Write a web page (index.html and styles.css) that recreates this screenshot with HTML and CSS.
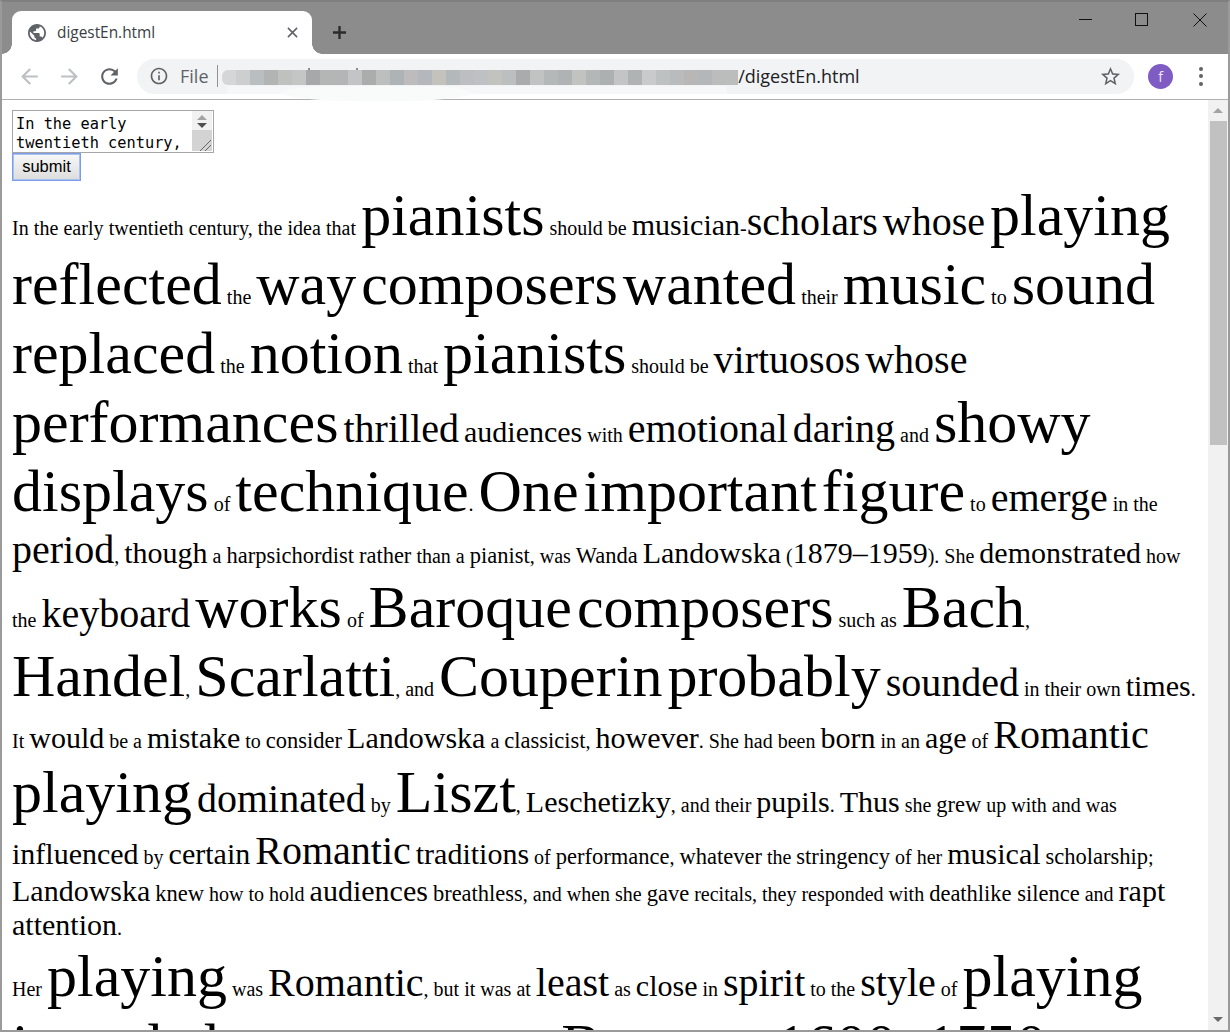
FILE: index.html
```html
<!DOCTYPE html>
<html>
	<head>
		<meta charset="UTF-8">
		<title>digestEn.html</title>
		<link rel="stylesheet" href="styles.css">
	</head>
	<body>
		<div class="window">
			<div class="tabstrip">
				<div class="tab">
					<svg class="favicon" viewBox="2 2 20 20"><path d="M12 2C6.48 2 2 6.48 2 12s4.48 10 10 10 10-4.48 10-10S17.52 2 12 2zm-1 17.93c-3.95-.49-7-3.85-7-7.93 0-.62.08-1.21.21-1.79L9 15v1c0 1.1.9 2 2 2v1.93zm6.9-2.54c-.26-.81-1-1.39-1.9-1.39h-1v-3c0-.55-.45-1-1-1H8v-2h2c.55 0 1-.45 1-1V7h2c1.1 0 2-.9 2-2v-.41c2.93 1.19 5 4.06 5 7.41 0 2.08-.8 3.97-2.1 5.39z"/></svg>
					<span class="tab-title">digestEn.html</span>
					<svg class="tab-close" viewBox="0 0 12 12"><path d="M1 1l10 10M11 1L1 11"/></svg>
				</div>
				<svg class="tab-new" viewBox="0 0 16 16"><path d="M8 1v14M1 8h14"/></svg>
				<div class="winbtns">
					<svg viewBox="0 0 14 14"><path d="M0 6.500h13"/></svg>
					<svg viewBox="0 0 14 14"><rect x=".5" y=".5" width="12" height="12"/></svg>
					<svg viewBox="0 0 14 14"><path d="M.5.5l13 13M13.500 .5l-13 13"/></svg>
				</div>
			</div>

			<div class="toolbar">
				<svg class="tool off" viewBox="0 0 24 24"><path d="M20 11H7.830l5.590-5.590L12 4l-8 8 8 8 1.410-1.410L7.830 13H20v-2z"/></svg>
				<svg class="tool off" viewBox="0 0 24 24"><path d="M4 11h12.170l-5.590-5.590L12 4l8 8-8 8-1.410-1.410L16.170 13H4v-2z"/></svg>
				<svg class="tool" viewBox="0 0 24 24"><path d="M17.650 6.350C16.200 4.900 14.210 4 12 4c-4.420 0-7.990 3.580-7.990 8s3.570 8 7.990 8c3.730 0 6.840-2.550 7.730-6h-2.080c-.82 2.330-3.040 4-5.650 4-3.310 0-6-2.690-6-6s2.690-6 6-6c1.660 0 3.140.69 4.220 1.780L13 11h7V4l-2.350 2.350z"/></svg>
				<div class="omnibox">
					<svg class="info" viewBox="0 0 24 24"><path d="M11 7h2v2h-2zm0 4h2v6h-2zm1-9C6.480 2 2 6.480 2 12s4.480 10 10 10 10-4.480 10-10S17.520 2 12 2zm0 18c-4.410 0-8-3.590-8-8s3.590-8 8-8 8 3.590 8 8-3.590 8-8 8z"/></svg>
					<span class="scheme">File</span>
					<span class="sep"></span>
					<span class="mosaic"></span>
					<span class="url">/digestEn.html</span>
					<svg class="star" viewBox="0 0 24 24"><path d="M22 9.240l-7.190-.62L12 2 9.190 8.630 2 9.240l5.460 4.730L5.820 21 12 17.270 18.180 21l-1.630-7.030L22 9.240zM12 15.400l-3.760 2.270 1-4.280-3.320-2.880 4.380-.38L12 6.100l1.710 4.040 4.380.38-3.320 2.880 1 4.280L12 15.400z"/></svg>
				</div>
				<div class="avatar">f</div>
				<div class="kebab"><i></i><i></i><i></i></div>
				<div class="smudge"></div>
			</div>

			<div class="view">
				<div class="page">
					<form class="digest-form">
						<div class="field">
							<textarea class="field-text">In the early twentieth century, the idea that pianists should be musician-scholars whose playing reflected the way composers wanted their music to sound</textarea>
							<div class="field-bar">
								<div class="field-arrows"><i class="up"></i><i class="down"></i></div>
								<div class="field-grip">
									<svg viewBox="0 0 12 12"><path d="M1 12L12 1M6 12l6-6"/></svg>
								</div>
							</div>
						</div>
						<button class="submit" type="button">submit</button>
					</form>

					<p class="digest"><span class="lead">In the early twentieth century, the idea that</span> <span class="f48">pianists</span> should be <span class="f24">musician</span>-<span class="f32">scholars</span> <span class="f32">whose</span> <span class="f48">playing</span> <span class="f48">reflected</span> the <span class="f48">way</span> <span class="f48">composers</span> <span class="f48">wanted</span> their <span class="f48">music</span> to <span class="f48">sound</span> <span class="f48">replaced</span> the <span class="f48">notion</span> that <span class="f48">pianists</span> should be <span class="f32">virtuosos</span> <span class="f32">whose</span> <span class="f48">performances</span> <span class="f32">thrilled</span> <span class="f24">audiences</span> with <span class="f32">emotional</span> <span class="f32">daring</span> and <span class="f48">showy</span> <span class="f48">displays</span> of <span class="f48">technique</span>. <span class="f48">One</span> <span class="f48">important</span> <span class="f48">figure</span> to <span class="f32">emerge</span> in the <span class="f32">period</span>, <span class="f24">though</span> a <span class="f18">harpsichordist</span> <span class="f18">rather</span> than a <span class="f18">pianist</span>, was <span class="f18">Wanda</span> <span class="f24">Landowska</span> (<span class="f24">1879–1959</span>). She <span class="f24">demonstrated</span> how the <span class="f32">keyboard</span> <span class="f48">works</span> of <span class="f48">Baroque</span> <span class="f48">composers</span> such as <span class="f48">Bach</span>, <span class="f48">Handel</span>, <span class="f48">Scarlatti</span>, and <span class="f48">Couperin</span> <span class="f48">probably</span> <span class="f32">sounded</span> in their own <span class="f24">times</span>. It <span class="f24">would</span> be a <span class="f24">mistake</span> to <span class="f18">consider</span> <span class="f24">Landowska</span> a <span class="f18">classicist</span>, <span class="f24">however</span>. She had been <span class="f24">born</span> in an <span class="f24">age</span> of <span class="f32">Romantic</span> <span class="f48">playing</span> <span class="f32">dominated</span> by <span class="f48">Liszt</span>, <span class="f24">Leschetizky</span>, and their <span class="f24">pupils</span>. <span class="f24">Thus</span> she <span class="f18">grew</span> up with and was <span class="f24">influenced</span> by <span class="f24">certain</span> <span class="f32">Romantic</span> <span class="f24">traditions</span> of <span class="f18">performance</span>, <span class="f18">whatever</span> the <span class="f18">stringency</span> of her <span class="f24">musical</span> <span class="f18">scholarship</span>; <span class="f24">Landowska</span> <span class="f18">knew</span> how to hold <span class="f24">audiences</span> <span class="f18">breathless</span>, and when she <span class="f18">gave</span> recitals, they responded with <span class="f18">deathlike silence</span> and <span class="f24">rapt</span> <span class="f24">attention</span>.</p>

					<p class="digest">Her <span class="f48">playing</span> was <span class="f32">Romantic</span>, but it was at <span class="f32">least</span> as <span class="f24">close</span> in <span class="f32">spirit</span> to the <span class="f32">style</span> of <span class="f48">playing</span> <span class="f48">intended</span> by <span class="f48">composers</span> of the <span class="f48">Baroque</span> (<span class="f48">1600–1750</span>).</p>
				</div>

				<div class="scrollbar">
					<div class="scroll-btn"><i class="up"></i></div>
					<div class="thumb"></div>
					<div class="scroll-rest"></div>
					<div class="scroll-btn"><i class="down"></i></div>
				</div>
			</div>
		</div>
	</body>
</html>
```

FILE: styles.css
```css
* {
	box-sizing: border-box;
}

html, body {
	margin: 0;
	padding: 0;
	height: 100%;
	overflow: hidden;
}

.window {
	width: 1230px;
	height: 1032px;
	display: flex;
	flex-direction: column;
	border: 2px solid #9a9a9a;
	border-top-color: #808080;
	overflow: hidden;
	background: #fff;
}

/* tab strip */
.tabstrip {
	height: 52px;
	flex: none;
	display: flex;
	align-items: flex-end;
	padding-left: 10px;
	background: #8c8c8c;
	position: relative;
}

.tab {
	width: 300px;
	height: 43px;
	display: flex;
	align-items: center;
	padding: 0 14px 0 16px;
	background: #fff;
	border-radius: 9px 9px 0 0;
	position: relative;
}

.tab::before, .tab::after {
	content: "";
	position: absolute;
	bottom: 0;
	width: 10px;
	height: 10px;
}

.tab::before {
	left: -10px;
	background: radial-gradient(circle at 0 0, #8c8c8c 9.500px, #fff 10px);
}

.tab::after {
	right: -10px;
	background: radial-gradient(circle at 100% 0, #8c8c8c 9.500px, #fff 10px);
}

.favicon {
	width: 18px;
	height: 18px;
	fill: #5f6368;
	flex: none;
}

.tab-title {
	margin-left: 11px;
	font: 15.400px "Open Sans", sans-serif;
	color: #3c4043;
	flex: 1;
}

.tab-close {
	width: 11px;
	height: 11px;
	fill: none;
	stroke: #5f6368;
	stroke-width: 1.700;
}

.tab-new {
	width: 15px;
	height: 15px;
	margin: 0 0 14px 20px;
	fill: none;
	stroke: #2b2b2b;
	stroke-width: 2.500;
}

.winbtns {
	margin-left: auto;
	align-self: flex-start;
	display: flex;
	gap: 44px;
	padding: 11px 21px 0 0;
}

.winbtns svg {
	width: 14px;
	height: 14px;
	fill: none;
	stroke: #111;
	stroke-width: 1;
}

.winbtns svg:first-child {
	margin-right: -2px;
}

/* toolbar */
.toolbar {
	height: 46px;
	flex: none;
	display: flex;
	align-items: center;
	gap: 15px;
	padding: 0 0 1px 14.500px;
	background: #fff;
	border-bottom: 1px solid #b0b0b0;
	position: relative;
}

.tool {
	width: 25px;
	height: 25px;
	flex: none;
	fill: #5f6368;
}

.tool.off {
	fill: #bcc0c4;
}

.omnibox {
	width: 997px;
	height: 35px;
	flex: none;
	margin-left: 0.500px;
	display: flex;
	align-items: center;
	padding: 0 12px;
	background: #f1f3f4;
	border-radius: 18px;
}

.info {
	width: 20px;
	height: 20px;
	flex: none;
	fill: #5f6368;
}

.scheme {
	margin-left: 11px;
	font: 18px "Open Sans", sans-serif;
	color: #5f6368;
}

.sep {
	width: 1px;
	height: 22px;
	margin-left: 8.700px;
	background: #8f9397;
}

.mosaic {
	width: 516px;
	height: 15px;
	margin: 2px 0 0 4px;
	position: relative;
	z-index: 2;
	background: linear-gradient(90deg,
		#d4d6d7 0 14px, #ccced0 0 28px, #b9bec0 0 42px, #b2b4b4 0 56px, #bfc1be 0 70px,
		#c4c5c5 0 84px, #a6a8a9 0 98px, #b4b6b6 0 112px, #b3b5b6 0 126px, #c2c4c5 0 140px,
		#abadad 0 154px, #bcbfbe 0 168px, #aeb3b6 0 182px, #bdbbbc 0 196px, #b4b7bb 0 210px,
		#c3c2bc 0 224px, #b3b8bb 0 238px, #bcbec1 0 252px, #bec0c3 0 266px, #c2c3bf 0 280px,
		#bcbfc0 0 294px, #a9abac 0 308px, #c0c3c1 0 322px, #b4b8b8 0 336px, #b0b3b3 0 350px,
		#c1c3c1 0 364px, #b4b7b7 0 378px, #adb0b0 0 392px, #c2c4c5 0 406px, #b0b3b4 0 420px,
		#c8cacb 0 434px, #bec1c2 0 448px, #b9bbbc 0 462px, #b8b7b5 0 476px, #b4b7ba 0 490px,
		#bbbdbd 0 516px);
	border-radius: 6px 0 0 6px;
}

.mosaic::before {
	content: "";
	position: absolute;
	left: 86px;
	top: -2px;
	width: 2px;
	height: 2px;
	background: #8a8c8e;
	box-shadow: 48px 0 #8a8c8e;
}

.url {
	font: 18px "Open Sans", sans-serif;
	color: #202124;
}

.star {
	width: 23px;
	height: 23px;
	margin-left: auto;
	fill: #5f6368;
}

.avatar {
	width: 25px;
	height: 25px;
	flex: none;
	margin-left: -1px;
	border-radius: 50%;
	background: #7e5cc4;
	color: #eee8f8;
	font: 14px/25px "Open Sans", sans-serif;
	text-align: center;
}

.kebab {
	display: flex;
	flex-direction: column;
	gap: 3.500px;
	margin-left: 11px;
}

.kebab i {
	width: 4px;
	height: 4px;
	border-radius: 50%;
	background: #5f6368;
}

/* white-out left over the address, lies across the toolbar line */
.smudge {
	position: absolute;
	left: 225px;
	top: 32px;
	width: 500px;
	height: 16px;
	z-index: 1;
	background:
		radial-gradient(ellipse 98px 9px at 150px 7px, #f9fafa 92%, transparent 100%),
		linear-gradient(#f6f7f8, #f6f7f8) 0 0 / 100% 8px no-repeat;
}

/* page */
.view {
	flex: 1;
	min-height: 0;
	display: flex;
}

.page {
	flex: 1;
	min-width: 0;
	padding: 10px 8px 0 10px;
	overflow: hidden;
	background: #fff;
}

.digest-form {
	display: flex;
	flex-direction: column;
	align-items: flex-start;
}

.field {
	width: 202px;
	height: 43px;
	position: relative;
}

.field-text {
	display: block;
	width: 100%;
	height: 100%;
	margin: 0;
	padding: 4px 24px 0 3px;
	border: 1px solid #a6a6a6;
	border-radius: 0;
	font: 15.300px/19px "DejaVu Sans Mono", monospace;
	color: #000;
	overflow: hidden;
	resize: none;
}

.field-bar {
	position: absolute;
	top: 1px;
	right: 2px;
	bottom: 2px;
	width: 20px;
	display: flex;
	flex-direction: column;
}

.field-arrows {
	height: 19px;
	display: flex;
	flex-direction: column;
	align-items: center;
	gap: 3px;
	padding-top: 4px;
	background: #f1f1f1;
}

.field-grip {
	flex: 1;
	background: #d3d3d3;
	position: relative;
}

.field-grip svg {
	position: absolute;
	right: 1px;
	bottom: 0;
	width: 12px;
	height: 12px;
	fill: none;
	stroke: #666;
	stroke-width: 1;
}

.field-arrows .up, .scroll-btn .up {
	width: 0;
	height: 0;
	border: 5px solid transparent;
	border-top: 0;
	border-bottom: 5px solid #a3a3a3;
}

.field-arrows .down, .scroll-btn .down {
	width: 0;
	height: 0;
	border: 5px solid transparent;
	border-bottom: 0;
	border-top: 5px solid #505050;
}

.submit {
	width: 69px;
	height: 28px;
	margin: 0;
	padding: 0 0 2px;
	border: 1px solid #7c9de8;
	box-shadow: inset 0 0 0 1px #a9c0f0;
	background: linear-gradient(#f8f8f8, #dcdcdc);
	font: 16.500px "Liberation Sans", Arial, sans-serif;
	color: #000;
}

.digest {
	margin: 0;
	font: 20px "Liberation Serif", "Times New Roman", serif;
	color: #000;
}

.lead {
	letter-spacing: 0.050px;
}

.f18 { font-size: 22.500px; }
.f24 { font-size: 30px; }
.f32 { font-size: 40px; }
.f48 { font-size: 60px; }

/* scrollbar */
.scrollbar {
	width: 20px;
	flex: none;
	display: flex;
	flex-direction: column;
	background: #f1f1f1;
}

.scroll-btn {
	height: 21px;
	flex: none;
	display: flex;
	align-items: center;
	justify-content: center;
}

.scroll-btn .down {
	border-top-color: #6a6a6a;
}

.thumb {
	height: 324px;
	flex: none;
	margin: 0 1px 0 2px;
	background: #c1c1c1;
}

.scroll-rest {
	flex: 1;
}
```
